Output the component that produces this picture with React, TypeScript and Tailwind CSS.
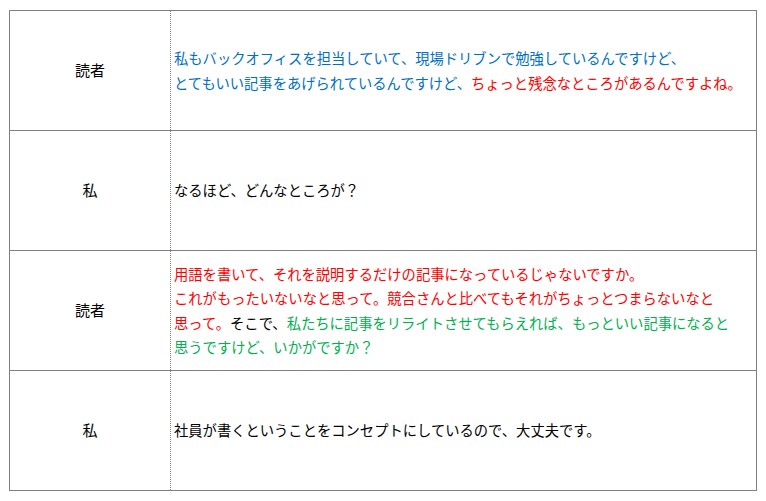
const BLUE = "text-[#0070c0]";
const RED = "text-[#ff0000]";
const GREEN = "text-[#00b050]";

type Seg = { t: string; c?: string };
type Row = { who: string; lines: Seg[][] };

const rows: Row[] = [
  {
    who: "読者",
    lines: [
      [{ t: "私もバックオフィスを担当していて、現場ドリブンで勉強しているんですけど、", c: BLUE }],
      [
        { t: "とてもいい記事をあげられているんですけど、", c: BLUE },
        { t: "ちょっと残念なところがあるんですよね。", c: RED },
      ],
    ],
  },
  {
    who: "私",
    lines: [[{ t: "なるほど、どんなところが？" }]],
  },
  {
    who: "読者",
    lines: [
      [{ t: "用語を書いて、それを説明するだけの記事になっているじゃないですか。", c: RED }],
      [{ t: "これがもったいないなと思って。競合さんと比べてもそれがちょっとつまらないなと", c: RED }],
      [
        { t: "思って。", c: RED },
        { t: "そこで、" },
        { t: "私たちに記事をリライトさせてもらえれば、もっといい記事になると", c: GREEN },
      ],
      [{ t: "思うですけど、いかがですか？", c: GREEN }],
    ],
  },
  {
    who: "私",
    lines: [[{ t: "社員が書くということをコンセプトにしているので、大丈夫です。" }]],
  },
];

export default function App() {
  return (
    <div
      className="w-[766px] h-[501px] bg-white pt-[10px] pl-[9px] text-black"
      style={{ fontFamily: '"Noto Sans CJK JP", "Noto Sans", sans-serif' }}
    >
      <div className="w-[748px] border border-[#808080] flex flex-col">
        {rows.map((r, i) => (
          <div
            key={i}
            className={`flex ${i < rows.length - 1 ? "h-[120px] border-b border-[#808080]" : "h-[119px]"}`}
          >
            <div className="w-[161px] shrink-0 border-r border-dotted border-[#808080] flex items-center justify-center text-[15px]">
              {r.who}
            </div>
            <div className="flex-1 flex flex-col justify-center pl-[3px] text-[14.3px] leading-[24.5px] whitespace-nowrap">
              {r.lines.map((line, j) => (
                <div key={j}>
                  {line.map((s, k) => (
                    <span key={k} className={s.c}>
                      {s.t}
                    </span>
                  ))}
                </div>
              ))}
            </div>
          </div>
        ))}
      </div>
    </div>
  );
}
